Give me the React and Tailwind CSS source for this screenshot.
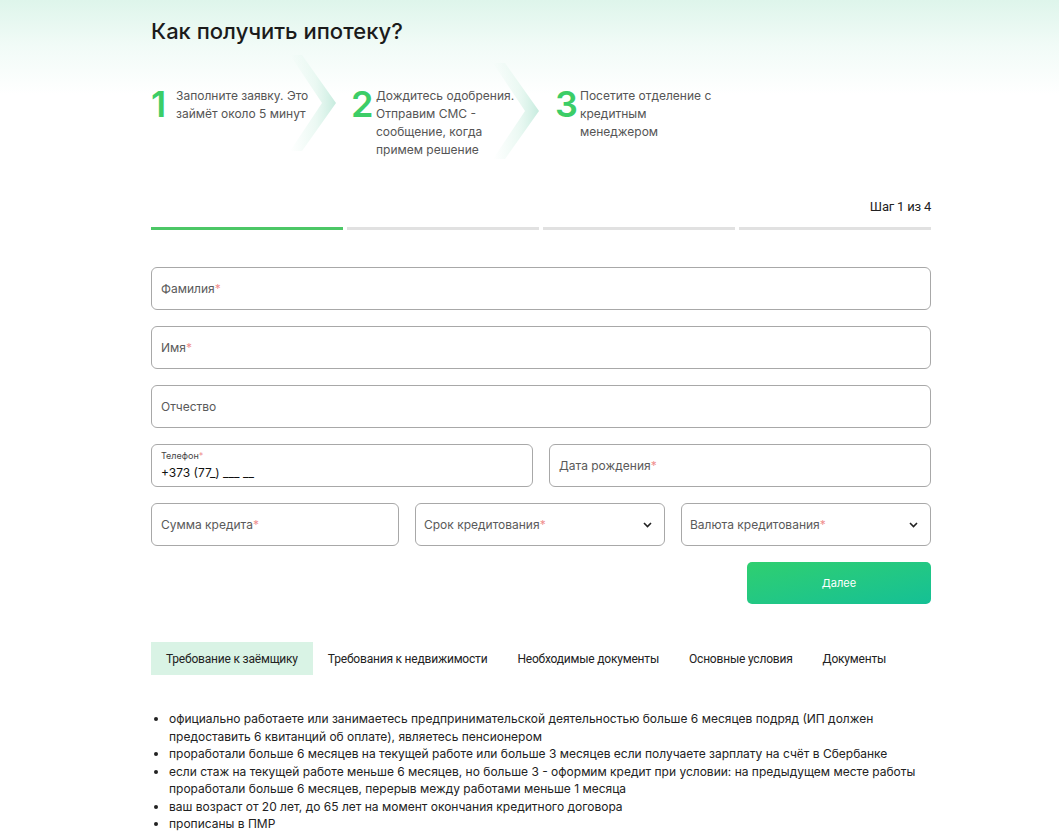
import React from 'react';

const steps = [
  { num: '1', text: 'Заполните заявку. Это займёт около 5 минут', width: 'w-[140px]', chevron: '-ml-[26px] mr-[15px] -mt-[6px]' },
  { num: '2', text: 'Дождитесь одобрения. Отправим СМС - сообщение, когда примем решение', width: 'w-[140px]', chevron: '-ml-[23px] mr-[16px] mt-[2px]' },
  { num: '3', text: 'Посетите отделение с кредитным менеджером', width: 'w-[134px]' },
];

const tabs = [
  'Требование к заёмщику',
  'Требования к недвижимости',
  'Необходимые документы',
  'Основные условия',
  'Документы',
];

const requirements = [
  'официально работаете или занимаетесь предпринимательской деятельностью больше 6 месяцев подряд (ИП должен предоставить 6 квитанций об оплате), являетесь пенсионером',
  'проработали больше 6 месяцев на текущей работе или больше 3 месяцев если получаете зарплату на счёт в Сбербанке',
  'если стаж на текущей работе меньше 6 месяцев, но больше 3 - оформим кредит при условии: на предыдущем месте работы проработали больше 6 месяцев, перерыв между работами меньше 1 месяца',
  'ваш возраст от 20 лет, до 65 лет на момент окончания кредитного договора',
  'прописаны в ПМР',
];

function Chevron({ id }) {
  return (
    <svg width="46" height="96" viewBox="0 0 46 96" className="shrink-0">
      <defs>
        <linearGradient id={id} x1="0" y1="0" x2="1" y2="0">
          <stop offset="0" stopColor="#dff5ec" stopOpacity="0" />
          <stop offset="0.55" stopColor="#dcf4ea" stopOpacity="0.55" />
          <stop offset="1" stopColor="#c6ebde" stopOpacity="1" />
        </linearGradient>
      </defs>
      <polygon points="0,0 12,0 46,48 12,96 0,96 32,48" fill={`url(#${id})`} />
    </svg>
  );
}

function Req() {
  return <span className="text-[#ef8f8f]">*</span>;
}

function Field({ label, required = true, className = '' }) {
  return (
    <div className={`h-[43px] border border-[#a8a8a8] rounded-[6px] px-[9px] flex items-center text-[12px] text-[#5a5a5a] ${className}`}>
      <span>{label}</span>
      {required && <Req />}
    </div>
  );
}

function SelectField({ label }) {
  return (
    <div className="flex-1 h-[43px] border border-[#a8a8a8] rounded-[6px] pl-[8px] pr-[12px] flex items-center justify-between text-[12px] text-[#5a5a5a]">
      <span>
        {label}
        <Req />
      </span>
      <svg width="9" height="6" viewBox="0 0 9 6" fill="none">
        <path d="M1 1l3.5 3.5L8 1" stroke="#222" strokeWidth="1.6" />
      </svg>
    </div>
  );
}

export default function App() {
  return (
    <div className="min-h-[839px] bg-white font-['Inter',sans-serif] text-[#222]">
      <div className="bg-[linear-gradient(to_bottom,#def5eb_0px,#f1fbf7_45px,#ffffff_95px)]">
        <div className="ml-[151px] w-[780px] pt-[17px]">
          <h1 className="text-[22px] leading-[28px] font-medium text-[#1b1b1b]">Как получить ипотеку?</h1>

          <div className="flex mt-[16px] h-[112px]">
            {steps.map((s) => (
              <div key={s.num} className="flex items-start">
                <div className="flex items-start gap-[5px] pt-[26px]">
                  <span className="text-[36px] leading-[34px] font-semibold text-[#3ccd67] w-[20px]">{s.num}</span>
                  <p className={`${s.width} text-[12px] leading-[18px] text-[#555]`}>{s.text}</p>
                </div>
                {s.chevron && (
                  <div className={s.chevron}>
                    <Chevron id={`chev-${s.num}`} />
                  </div>
                )}
              </div>
            ))}
          </div>
        </div>
      </div>

      <div className="ml-[151px] w-[780px]">
        <div className="flex justify-end mt-[26px] font-['Roboto',sans-serif] text-[13px] leading-[16px] text-[#222] tracking-[-0.2px]">
          Шаг 1 из 4
        </div>
        <div className="flex gap-[4px] mt-[12px]">
          <div className="flex-1 h-[3px] bg-[#4cc766]" />
          <div className="flex-1 h-[3px] bg-[#e1e1e1]" />
          <div className="flex-1 h-[3px] bg-[#e1e1e1]" />
          <div className="flex-1 h-[3px] bg-[#e1e1e1]" />
        </div>

        <div className="flex flex-col gap-[16px] mt-[37px]">
          <Field label="Фамилия" />
          <Field label="Имя" />
          <Field label="Отчество" required={false} />
          <div className="flex gap-[16px]">
            <div className="flex-1 h-[43px] border border-[#a8a8a8] rounded-[6px] px-[9px] pt-[5px] flex flex-col">
              <span className="text-[9px] leading-[12px] text-[#444]">
                Телефон<Req />
              </span>
              <span className="text-[12px] leading-[18px] text-[#111] mt-[2px]">+373 (77_) ___ __</span>
            </div>
            <Field label="Дата рождения" className="flex-1" />
          </div>
          <div className="flex gap-[16px]">
            <Field label="Сумма кредита" className="flex-1" />
            <SelectField label="Срок кредитования" />
            <SelectField label="Валюта кредитования" />
          </div>
        </div>

        <div className="flex justify-end mt-[16px]">
          <button className="w-[184px] h-[42px] rounded-[5px] bg-gradient-to-br from-[#2fcf6f] to-[#14c095] text-white text-[11px]">
            Далее
          </button>
        </div>

        <div className="flex mt-[38px] font-['Roboto',sans-serif] text-[12px] tracking-[-0.2px] text-[#222]">
          {tabs.map((t, i) => (
            <div key={t} className={`h-[33px] px-[15px] flex items-center ${i === 0 ? 'bg-[#d9f3e5]' : ''}`}>
              {t}
            </div>
          ))}
        </div>

        <ul className="list-disc pl-[18px] mt-[35px] text-[12px] leading-[17.5px] text-[#222]">
          {requirements.map((r) => (
            <li key={r}>{r}</li>
          ))}
        </ul>
      </div>
    </div>
  );
}
